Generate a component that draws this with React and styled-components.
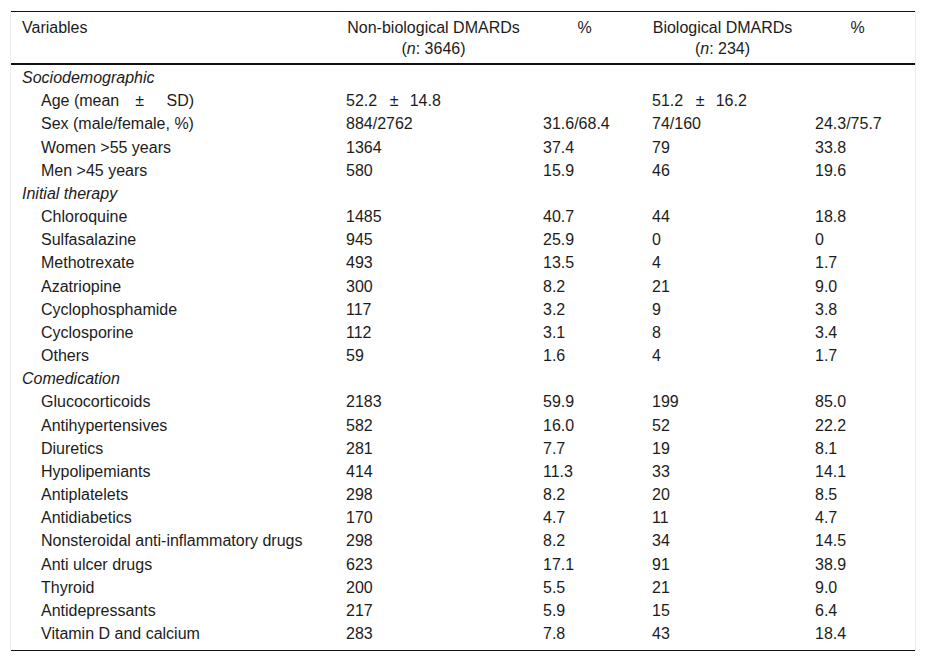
import React from 'react';
import styled, { createGlobalStyle } from 'styled-components';

const GlobalStyle = createGlobalStyle`
  body {
    margin: 0;
    background: #fff;
    font-family: "Liberation Sans", Arial, sans-serif;
    color: #1c1c1c;
  }
`;

const Frame = styled.div`
  margin: 11px 0 0 10px;
  width: 904px;
  border-left: 1px solid #ececec;
  border-right: 1px solid #ececec;
`;

const Table = styled.table`
  width: 904px;
  border-collapse: collapse;
  table-layout: fixed;
  font-size: 16px;
  border-top: 1px solid #111;
  border-bottom: 1px solid #111;
`;

const Head = styled.thead`
  border-bottom: 2px solid #111;
`;

const HeadCell = styled.th`
  font-weight: normal;
  line-height: 21px;
  padding: 5px 11px 4px;
  padding-right: ${(p) => (p.$pct ? '15px' : '11px')};
  vertical-align: top;
  text-align: ${(p) => (p.$left ? 'left' : 'center')};
`;

const Row = styled.tr`
  &:last-child td {
    padding-bottom: 7px;
  }
`;

const Cell = styled.td`
  line-height: 19.17px;
  padding: 3px 11px 1px;
  padding-left: ${(p) => (p.$indent ? '30px' : '11px')};
  white-space: nowrap;
  font-style: ${(p) => (p.$group ? 'italic' : 'normal')};
`;

const Gap = styled.span`
  white-space: pre;
`;

const cols = [324, 197, 109, 163, 111];

const pm = '\u2002\u2009\u200A±\u2002\u2009';

const groups = [
  {
    title: 'Sociodemographic',
    rows: [
      ['Age (mean\u2003±\u2003\u2009\u2009SD)', `52.2${pm}14.8`, '', `51.2${pm}16.2`, ''],
      ['Sex (male/female, %)', '884/2762', '31.6/68.4', '74/160', '24.3/75.7'],
      ['Women >55 years', '1364', '37.4', '79', '33.8'],
      ['Men >45 years', '580', '15.9', '46', '19.6'],
    ],
  },
  {
    title: 'Initial therapy',
    rows: [
      ['Chloroquine', '1485', '40.7', '44', '18.8'],
      ['Sulfasalazine', '945', '25.9', '0', '0'],
      ['Methotrexate', '493', '13.5', '4', '1.7'],
      ['Azatriopine', '300', '8.2', '21', '9.0'],
      ['Cyclophosphamide', '117', '3.2', '9', '3.8'],
      ['Cyclosporine', '112', '3.1', '8', '3.4'],
      ['Others', '59', '1.6', '4', '1.7'],
    ],
  },
  {
    title: 'Comedication',
    rows: [
      ['Glucocorticoids', '2183', '59.9', '199', '85.0'],
      ['Antihypertensives', '582', '16.0', '52', '22.2'],
      ['Diuretics', '281', '7.7', '19', '8.1'],
      ['Hypolipemiants', '414', '11.3', '33', '14.1'],
      ['Antiplatelets', '298', '8.2', '20', '8.5'],
      ['Antidiabetics', '170', '4.7', '11', '4.7'],
      ['Nonsteroidal anti-inflammatory drugs', '298', '8.2', '34', '14.5'],
      ['Anti ulcer drugs', '623', '17.1', '91', '38.9'],
      ['Thyroid', '200', '5.5', '21', '9.0'],
      ['Antidepressants', '217', '5.9', '15', '6.4'],
      ['Vitamin D and calcium', '283', '7.8', '43', '18.4'],
    ],
  },
];

export default function App() {
  return (
    <>
      <GlobalStyle />
      <Frame>
        <Table>
          <colgroup>
            {cols.map((w, i) => (
              <col key={i} style={{ width: w }} />
            ))}
          </colgroup>
          <Head>
            <tr>
              <HeadCell $left>Variables</HeadCell>
              <HeadCell>
                Non-biological DMARDs
                <br />(<i>n</i>: 3646)
              </HeadCell>
              <HeadCell $pct>%</HeadCell>
              <HeadCell>
                Biological DMARDs
                <br />(<i>n</i>: 234)
              </HeadCell>
              <HeadCell $pct>%</HeadCell>
            </tr>
          </Head>
          <tbody>
            {groups.map((g) => (
              <React.Fragment key={g.title}>
                <Row>
                  <Cell $group colSpan={5}>{g.title}</Cell>
                </Row>
                {g.rows.map((r) => (
                  <Row key={r[0]}>
                    {r.map((v, i) => (
                      <Cell key={i} $indent={i === 0}>
                        <Gap>{v}</Gap>
                      </Cell>
                    ))}
                  </Row>
                ))}
              </React.Fragment>
            ))}
          </tbody>
        </Table>
      </Frame>
    </>
  );
}
